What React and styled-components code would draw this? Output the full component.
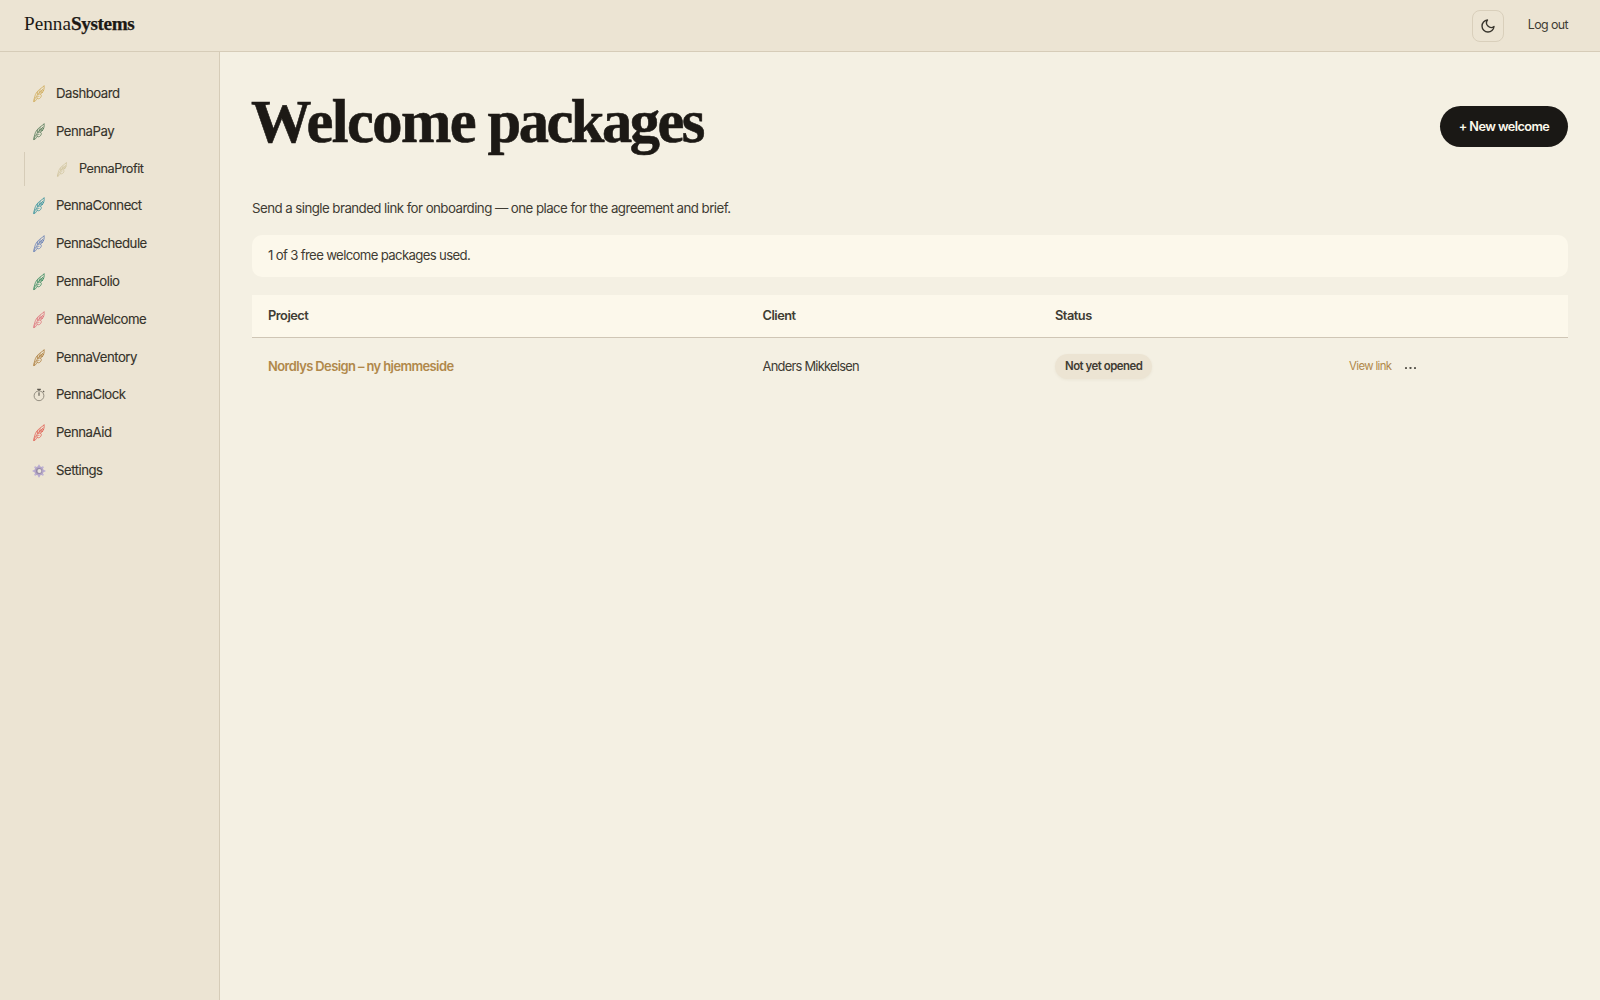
import React from "react";
import styled, { createGlobalStyle } from "styled-components";

const Global = createGlobalStyle`
  *, *::before, *::after { box-sizing: border-box; }
  body { margin: 0; background: #f4f0e3; color: #3f3c33; font-family: Inter, "Liberation Sans", sans-serif; }
`;

const Page = styled.div`
  display: flex;
  flex-direction: column;
  height: 100vh;
`;

const TopBar = styled.header`
  display: flex;
  align-items: center;
  justify-content: space-between;
  height: 52px;
  padding: 0 32px 0 24px;
  background: #ece4d3;
  border-bottom: 1px solid #d6ccb8;
`;

const Logo = styled.div`
  font-family: "Liberation Serif", serif;
  font-size: 19.2px;
  line-height: 22px;
  margin-bottom: 4px;
  color: #1c1915;
  b { letter-spacing: -0.38px; -webkit-text-stroke: 0.25px currentColor; }
`;

const TopActions = styled.div`
  display: flex;
  align-items: center;
  gap: 23.5px;
`;

const ThemeButton = styled.button`
  display: grid;
  place-items: center;
  width: 32px;
  height: 32px;
  padding: 0;
  background: transparent;
  border: 1px solid #d9cfbb;
  border-radius: 8px;
  color: #38352d;
`;

const LogOut = styled.a`
  font-size: 12.4px;
  line-height: 20px;
  letter-spacing: -0.58px;
  padding-bottom: 2px;
`;

const Body = styled.div`
  display: flex;
  flex: 1;
  min-height: 0;
`;

const Sidebar = styled.nav`
  display: flex;
  flex-direction: column;
  gap: 2px;
  flex: 0 0 220px;
  padding: 23.5px 16px 0 24px;
  background: #ece4d3;
  border-right: 1px solid #d6ccb8;
`;

const NavItem = styled.a`
  display: flex;
  align-items: center;
  gap: 10px;
  height: ${(p) => (p.$short ? 35 : 36)}px;
  padding: 0 0 ${(p) => (p.$short ? 2 : 1)}px 8px;
  font-size: 13.2px;
  letter-spacing: -0.5px;
  color: #35322a;
  -webkit-text-stroke: 0.12px currentColor;
  svg { flex: none; position: relative; top: 1px; }
`;

const SubItem = styled(NavItem)`
  gap: 11px;
  height: 34px;
  padding-left: 31px;
  font-size: 12.7px;
  letter-spacing: -0.48px;
  border-left: 1px solid #d6ccb8;
`;

const Main = styled.main`
  flex: 1;
  min-width: 0;
  padding: 32px 32px 0;
`;

const TitleRow = styled.div`
  display: flex;
  align-items: center;
  justify-content: space-between;
  height: 85px;
`;

const Title = styled.h1`
  margin: 0 0 10px -1px;
  font-family: "Liberation Serif", serif;
  font-size: 60.5px;
  font-weight: 700;
  line-height: 68px;
  letter-spacing: -2.5px;
  color: #1c1915;
  -webkit-text-stroke: 0.6px currentColor;
`;

const LeadWord = styled.span`
  letter-spacing: -1.6px;
`;

const Primary = styled.button`
  width: 128px;
  height: 41px;
  padding: 0 0 1px;
  border: 0;
  border-radius: 21px;
  background: #1a1815;
  color: #fcf8eb;
  font: 600 12.7px Inter, sans-serif;
  letter-spacing: -0.57px;
`;

const Intro = styled.p`
  margin: 28px 0 15px;
  font-size: 13.3px;
  line-height: 22px;
  letter-spacing: -0.56px;
`;

const Notice = styled.div`
  display: flex;
  align-items: center;
  height: 42px;
  margin: 16px 0 18px;
  padding: 0 16px 2px;
  border-radius: 10px;
  background: #fcf8eb;
  font-size: 13.2px;
  letter-spacing: -0.66px;
`;

const Row = styled.div`
  display: grid;
  grid-template-columns: 494.5px 292.5px 294px 1fr;
  align-items: center;
  height: 58px;
  padding-bottom: 1px;
`;

const HeadRow = styled(Row)`
  height: 43px;
  background: #fcf8eb;
  border-bottom: 1px solid #cfc6b5;
  font-size: 12.8px;
  font-weight: 600;
  letter-spacing: -0.48px;
`;

const Cell = styled.div`
  display: flex;
  align-items: center;
  gap: 12.5px;
  padding: 0 16px;
  font-size: ${(p) => (p.$plain ? "12.9px" : "inherit")};
  letter-spacing: ${(p) => (p.$plain ? "-0.75px" : "inherit")};
`;

const ProjectLink = styled.a`
  font-size: 12.9px;
  font-weight: 600;
  letter-spacing: -0.57px;
  color: #b0884a;
`;

const Badge = styled.span`
  display: flex;
  align-items: center;
  height: 25px;
  padding: 0 10px 1px;
  border-radius: 13px;
  background: #ece4d3;
  box-shadow: 0 1px 3px rgba(80, 60, 20, 0.06);
  font-size: 11.4px;
  font-weight: 600;
  letter-spacing: -0.48px;
`;

const ViewLink = styled.a`
  padding-bottom: 1px;
  font-size: 11.4px;
  letter-spacing: -0.62px;
  color: #b0884a;
`;

const Feather = ({ color, size = 14 }) => (
  <svg width={size} height={size * 1.25} viewBox="0 0 14 17.5" fill="none" stroke={color} strokeWidth="0.75" strokeLinecap="round" strokeLinejoin="round">
    <path d="M1.8 16.6 C3 12.5 6.2 8.5 11 4" />
    <path d="M12.1 1 C9.5 3.2 4.8 5.6 3.4 9.6 L2.4 13 C1.8 14.2 1.7 15.5 1.8 16.6 C3.2 16.4 4.3 15.2 5 13.6" />
    <path d="M12.1 1 C12.6 3.6 11.7 7 8.8 9" />
    <path d="M5.6 9.6 C8 8.3 9.8 9.4 9.2 11.4 C8.4 13.9 5.4 14.6 5 12.8 C4.8 11.6 6 11 7 11.3" />
    <path d="M5.3 9 L5.9 6.6 M7.4 7.4 L8.2 4.8 M9.3 6.4 L11.6 5.5 M8 8 L10.6 7.4" />
  </svg>
);

const Stopwatch = () => (
  <svg width="14" height="15" viewBox="0 0 14 15" fill="none" stroke="#8a8477" strokeWidth="0.9">
    <circle cx="7" cy="7.8" r="4.9" />
    <path d="M5.2 1.4 H8.8 M7 1.4 V3 M11 2.9 L12.2 4.1" stroke="#5b564c" strokeWidth="1.1" />
    <path d="M7 7.8 V4.3" stroke="#38352d" />
  </svg>
);

const Gear = () => (
  <svg width="14" height="14" viewBox="0 0 14 14">
    <g stroke="#c3b6d4" strokeWidth="2">
      <path d="M7 0.7 V13.3 M0.7 7 H13.3 M2.6 2.6 L11.4 11.4 M11.4 2.6 L2.6 11.4" />
    </g>
    <circle cx="7" cy="7" r="4.7" fill="#b3a5c8" />
    <circle cx="7" cy="7" r="3" fill="#9488a6" />
    <circle cx="7.4" cy="6.9" r="2" fill="#e9e2da" />
  </svg>
);

const Moon = () => (
  <svg width="16" height="16" viewBox="0 0 24 24" fill="none" stroke="currentColor" strokeWidth="2.1" strokeLinecap="round" strokeLinejoin="round">
    <path d="M21 12.79A9 9 0 1 1 11.21 3 7 7 0 0 0 21 12.79z" />
  </svg>
);

const Dots = () => (
  <svg width="14" height="4" viewBox="0 0 14 4" fill="#55524a">
    <rect x="1" y="2" width="2" height="2" rx="0.4" />
    <rect x="5.5" y="2" width="2" height="2" rx="0.4" />
    <rect x="10" y="2" width="2" height="2" rx="0.4" />
  </svg>
);

const tools = [
  ["PennaConnect", "#2f8f9b"],
  ["PennaSchedule", "#6079b4"],
  ["PennaFolio", "#2f8558"],
  ["PennaWelcome", "#dc6b74"],
  ["PennaVentory", "#a97834"],
];

export default function App() {
  return (
    <Page>
      <Global />
      <TopBar>
        <Logo>Penna<b>Systems</b></Logo>
        <TopActions>
          <ThemeButton aria-label="Theme"><Moon /></ThemeButton>
          <LogOut>Log out</LogOut>
        </TopActions>
      </TopBar>
      <Body>
        <Sidebar>
          <NavItem><Feather color="#cfa955" />Dashboard</NavItem>
          <NavItem><Feather color="#4f7553" />PennaPay</NavItem>
          <SubItem><Feather color="#cdc098" size={12} />PennaProfit</SubItem>
          {tools.map(([name, color]) => (
            <NavItem key={name}><Feather color={color} />{name}</NavItem>
          ))}
          <NavItem $short><Stopwatch />PennaClock</NavItem>
          <NavItem><Feather color="#e0594d" />PennaAid</NavItem>
          <NavItem><Gear />Settings</NavItem>
        </Sidebar>
        <Main>
          <TitleRow>
            <Title><LeadWord>Welcome</LeadWord> packages</Title>
            <Primary>+ New welcome</Primary>
          </TitleRow>
          <Intro>Send a single branded link for onboarding — one place for the agreement and brief.</Intro>
          <Notice>1 of 3 free welcome packages used.</Notice>
          <HeadRow>
            <Cell>Project</Cell>
            <Cell>Client</Cell>
            <Cell>Status</Cell>
            <Cell />
          </HeadRow>
          <Row>
            <Cell><ProjectLink>Nordlys Design – ny hjemmeside</ProjectLink></Cell>
            <Cell $plain>Anders Mikkelsen</Cell>
            <Cell><Badge>Not yet opened</Badge></Cell>
            <Cell><ViewLink>View link</ViewLink><Dots /></Cell>
          </Row>
        </Main>
      </Body>
    </Page>
  );
}
